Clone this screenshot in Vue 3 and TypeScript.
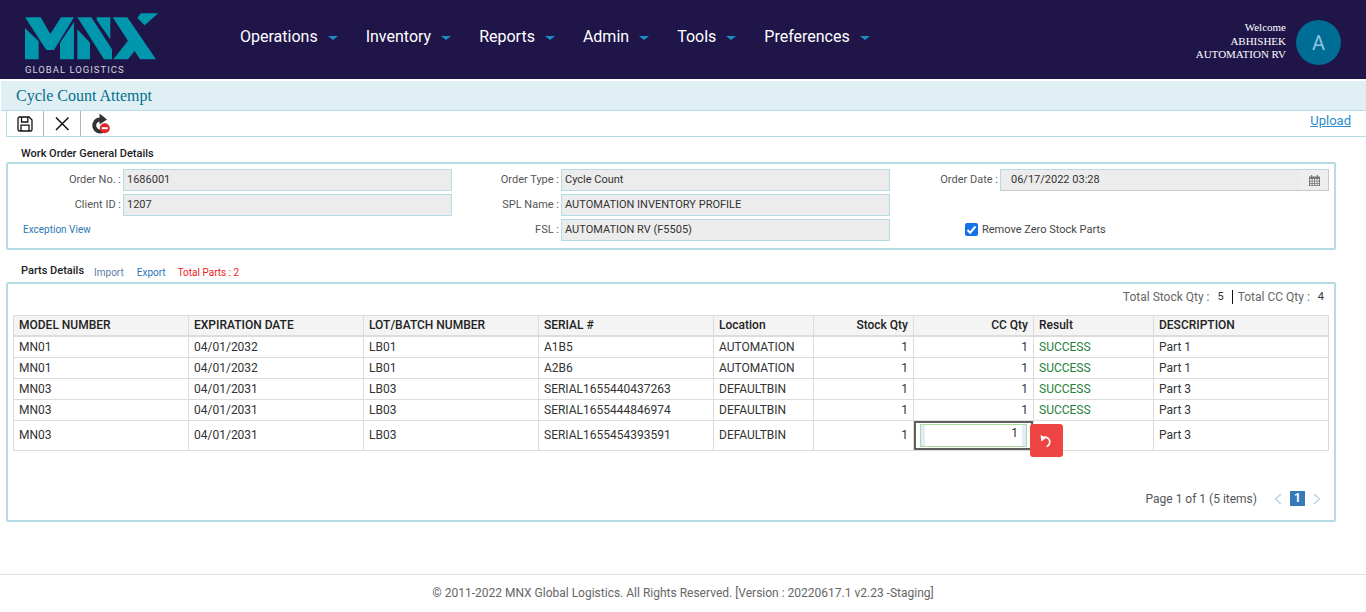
<script setup lang="ts">
type Part = {
  model: string;
  expiry: string;
  lot: string;
  serial: string;
  location: string;
  stock: number;
  cc: number;
  result: string;
  description: string;
};

const menu = ['Operations', 'Inventory', 'Reports', 'Admin', 'Tools', 'Preferences'];

const columns = [
  { label: 'MODEL NUMBER' },
  { label: 'EXPIRATION DATE' },
  { label: 'LOT/BATCH NUMBER' },
  { label: 'SERIAL #' },
  { label: 'Location' },
  { label: 'Stock Qty', right: true },
  { label: 'CC Qty', right: true },
  { label: 'Result' },
  { label: 'DESCRIPTION' },
];

const parts: Part[] = [
  { model: 'MN01', expiry: '04/01/2032', lot: 'LB01', serial: 'A1B5', location: 'AUTOMATION', stock: 1, cc: 1, result: 'SUCCESS', description: 'Part 1' },
  { model: 'MN01', expiry: '04/01/2032', lot: 'LB01', serial: 'A2B6', location: 'AUTOMATION', stock: 1, cc: 1, result: 'SUCCESS', description: 'Part 1' },
  { model: 'MN03', expiry: '04/01/2031', lot: 'LB03', serial: 'SERIAL1655440437263', location: 'DEFAULTBIN', stock: 1, cc: 1, result: 'SUCCESS', description: 'Part 3' },
  { model: 'MN03', expiry: '04/01/2031', lot: 'LB03', serial: 'SERIAL1655444846974', location: 'DEFAULTBIN', stock: 1, cc: 1, result: 'SUCCESS', description: 'Part 3' },
];

const editing: Part = { model: 'MN03', expiry: '04/01/2031', lot: 'LB03', serial: 'SERIAL1655454393591', location: 'DEFAULTBIN', stock: 1, cc: 1, result: '', description: 'Part 3' };
</script>

<template>
  <div class="page">
    <header class="topbar">
      <div class="logo">
        <svg width="134" height="47" viewBox="75 39 402 141">
          <g fill="#0097ad">
            <path d="M75 84L116 124V178H75Z" />
            <path d="M75 52H122L151 102L183 52H222L162 150H139Z" />
            <path d="M222 66V178H180V128Z" />
            <path d="M232 88L270 128V178H232Z" />
            <path d="M232 52H274L336 148V178H312Z" />
            <path d="M290 52H331V118L290 60Z" />
            <path d="M338 52H382L468 178H420Z" />
            <path d="M340 178L384 122L406 150L384 178Z" />
            <path d="M422 40H475L434 76L412 54Z" />
          </g>
        </svg>
        <span class="logo-text">GLOBAL LOGISTICS</span>
      </div>
      <nav class="menu">
        <a v-for="item in menu" :key="item" class="menu-item">
          {{ item }}<i class="caret"></i>
        </a>
      </nav>
      <div class="user">
        <div class="welcome">
          <div>Welcome</div>
          <div>ABHISHEK</div>
          <div>AUTOMATION RV</div>
        </div>
        <div class="avatar">A</div>
      </div>
    </header>

    <div class="title-bar">Cycle Count Attempt</div>

    <div class="toolbar">
      <button class="tool">
        <svg width="16" height="16" viewBox="0 0 16 16" fill="none" stroke="#111" stroke-width="1.3">
          <path d="M2.6 1H12L15 4V13.4A1.6 1.6 0 0 1 13.4 15H2.6A1.6 1.6 0 0 1 1 13.4V2.6A1.6 1.6 0 0 1 2.6 1Z" />
          <path d="M4.5 1V6H10.8V1M4 15V9.2H12V15" />
        </svg>
      </button>
      <button class="tool">
        <svg width="16" height="16" viewBox="0 0 16 16" fill="none" stroke="#111" stroke-width="1.5">
          <path d="M2 1.5L14.5 14M14.5 1.5L2 14" />
        </svg>
      </button>
      <button class="tool">
        <svg width="22" height="22" viewBox="0 0 22 22">
          <path fill="none" stroke="#333" stroke-width="4" d="M11 6.5A6 6 0 1 0 14 17.8" />
          <path fill="#333" d="M10.5 0.5L18 6.5L10.5 11.5Z" />
          <circle cx="15.8" cy="15.2" r="5" fill="#e0262b" />
          <rect x="12.8" y="14.2" width="6" height="2" fill="#fff" />
        </svg>
      </button>
      <a class="upload">Upload</a>
    </div>

    <section class="block">
      <h4 class="block-title">Work Order General Details</h4>
      <div class="box general">
        <div class="col">
          <div class="field"><label>Order No. :</label><span class="input">1686001</span></div>
          <div class="field"><label>Client ID :</label><span class="input">1207</span></div>
          <a class="exception">Exception View</a>
        </div>
        <div class="col">
          <div class="field"><label>Order Type :</label><span class="input">Cycle Count</span></div>
          <div class="field"><label>SPL Name :</label><span class="input">AUTOMATION INVENTORY PROFILE</span></div>
          <div class="field"><label>FSL :</label><span class="input">AUTOMATION RV (F5505)</span></div>
        </div>
        <div class="col">
          <div class="field">
            <label>Order Date :</label>
            <span class="input date">
              <span class="date-value">06/17/2022 03:28</span>
              <span class="date-btn">
                <svg width="11" height="11" viewBox="0 0 11 11">
                  <path fill="#777" d="M0 1.5H2V0H3.2V1.5H7.8V0H9V1.5H11V11H0ZM1 4V5.7H2.7V4ZM3.5 4V5.7H5.2V4ZM6 4V5.7H7.7V4ZM8.4 4V5.7H10V4ZM1 6.4V8H2.7V6.4ZM3.5 6.4V8H5.2V6.4ZM6 6.4V8H7.7V6.4ZM8.4 6.4V8H10V6.4ZM1 8.7V10.2H2.7V8.7ZM3.5 8.7V10.2H5.2V8.7ZM6 8.7V10.2H7.7V8.7ZM8.4 8.7V10.2H10V8.7Z" />
                </svg>
              </span>
            </span>
          </div>
          <div class="field empty"></div>
          <div class="check-row">
            <span class="checkbox">
              <svg width="13" height="13" viewBox="0 0 13 13" fill="none" stroke="#fff" stroke-width="2">
                <path d="M2.5 7L5.2 9.7L10.5 3.5" />
              </svg>
            </span>
            <span>Remove Zero Stock Parts</span>
          </div>
        </div>
      </div>
    </section>

    <section class="block parts">
      <div class="parts-head">
        <h4 class="block-title">Parts Details</h4>
        <a class="import">Import</a>
        <a class="export">Export</a>
        <span class="total-parts">Total Parts : 2</span>
      </div>
      <div class="box grid-box">
        <div class="totals">
          <span class="tot-label">Total Stock Qty :</span><span class="tot-val">5</span>
          <i class="tot-sep"></i>
          <span class="tot-label">Total CC Qty :</span><span class="tot-val last">4</span>
        </div>
        <table class="grid">
          <colgroup>
            <col style="width: 175px" />
            <col style="width: 175px" />
            <col style="width: 175px" />
            <col style="width: 175px" />
            <col style="width: 100px" />
            <col style="width: 100px" />
            <col style="width: 120px" />
            <col style="width: 120px" />
            <col style="width: 175px" />
          </colgroup>
          <thead>
            <tr>
              <th v-for="c in columns" :key="c.label" :class="{ num: c.right }">{{ c.label }}</th>
            </tr>
          </thead>
          <tbody>
            <tr v-for="p in parts" :key="p.serial">
              <td>{{ p.model }}</td>
              <td>{{ p.expiry }}</td>
              <td>{{ p.lot }}</td>
              <td>{{ p.serial }}</td>
              <td>{{ p.location }}</td>
              <td class="num">{{ p.stock }}</td>
              <td class="num">{{ p.cc }}</td>
              <td class="ok">{{ p.result }}</td>
              <td>{{ p.description }}</td>
            </tr>
            <tr class="edit-row">
              <td>{{ editing.model }}</td>
              <td>{{ editing.expiry }}</td>
              <td>{{ editing.lot }}</td>
              <td>{{ editing.serial }}</td>
              <td>{{ editing.location }}</td>
              <td class="num">{{ editing.stock }}</td>
              <td class="edit-cell">
                <div class="edit-frame">
                  <div class="edit-input">{{ editing.cc }}</div>
                </div>
                <button class="undo">
                  <svg width="16" height="16" viewBox="0 0 14 14" fill="none" stroke="#fff" stroke-width="1.5">
                    <path d="M4 3.9A4 4 0 1 1 6.6 11.8" />
                    <path fill="#fff" stroke="none" d="M1.4 1.8L6.4 4.2L2 7.4Z" />
                  </svg>
                </button>
              </td>
              <td></td>
              <td>{{ editing.description }}</td>
            </tr>
          </tbody>
        </table>
        <div class="pager">
          <span class="pager-info">Page 1 of 1 (5 items)</span>
          <svg class="chev" width="10" height="12" viewBox="0 0 10 12" fill="none" stroke="#bcd3ea" stroke-width="1.5">
            <path d="M8 1L2.5 6L8 11" />
          </svg>
          <span class="page-no">1</span>
          <svg class="chev" width="10" height="12" viewBox="0 0 10 12" fill="none" stroke="#bcd3ea" stroke-width="1.5">
            <path d="M2 1L7.5 6L2 11" />
          </svg>
        </div>
      </div>
    </section>

    <footer class="footer">© 2011-2022 MNX Global Logistics. All Rights Reserved. [Version : 20220617.1 v2.23 -Staging]</footer>
  </div>
</template>

<style scoped>
.page {
  height: 612px;
  display: flex;
  flex-direction: column;
  font-family: Roboto, "Liberation Sans", sans-serif;
  color: #333;
  background: #fff;
  overflow: hidden;
}

.topbar {
  height: 79px;
  flex: none;
  display: flex;
  align-items: center;
  background: #1f1549;
  color: #fff;
}

.logo {
  width: 240px;
  padding-left: 25px;
  box-sizing: border-box;
  height: 79px;
  display: flex;
  flex-direction: column;
  align-items: flex-start;
  padding-top: 13px;
  flex: none;
}

.logo svg {
  display: block;
}

.logo-text {
  font-size: 9.5px;
  letter-spacing: 1px;
  color: #d5d5dd;
  line-height: 10px;
  margin-top: 5px;
}

.menu {
  display: flex;
  flex: 1;
  gap: 28px;
  margin-top: -6px;
}

.menu-item {
  font-size: 16px;
  color: #fff;
  display: flex;
  align-items: center;
  line-height: 24px;
}

.caret {
  width: 0;
  height: 0;
  margin: 2px 0 0 10px;
  border-left: 5px solid transparent;
  border-right: 5px solid transparent;
  border-top: 4px solid #1b8fc4;
}

.user {
  display: flex;
  align-items: center;
  padding-right: 25px;
  margin-top: 6px;
}

.welcome {
  font-family: "Liberation Serif", serif;
  font-size: 11px;
  line-height: 13.5px;
  text-align: right;
  margin-right: 10px;
  margin-top: -2px;
}

.avatar {
  width: 45px;
  height: 45px;
  border-radius: 50%;
  background: #006d94;
  color: #8ec3e4;
  font-size: 20px;
  display: flex;
  align-items: center;
  justify-content: center;
}

.title-bar {
  height: 29px;
  flex: none;
  margin: 2px 0 0 1px;
  padding-left: 15px;
  background: #e0eff3;
  border-bottom: 1px solid #b5dce2;
  font-family: "Liberation Serif", serif;
  font-size: 16px;
  line-height: 29px;
  color: #00708f;
}

.toolbar {
  height: 25px;
  flex: none;
  margin-left: 6px;
  display: flex;
  align-items: center;
  border-left: 1px solid #b5dce2;
  border-bottom: 1px solid #b5dce2;
}

.tool {
  width: 37px;
  height: 25px;
  padding: 0;
  border: 0;
  border-right: 1px solid #b5b5b5;
  background: #fff;
  display: flex;
  align-items: center;
  justify-content: center;
}

.tool:last-of-type {
  border-right: 0;
}

.upload {
  margin-left: auto;
  margin-right: 15px;
  margin-top: -6px;
  font-size: 13px;
  color: #2a8cc8;
  text-decoration: underline;
}

.block {
  margin: 0 30px 0 6px;
  flex: none;
}

.block-title {
  margin: 0;
  padding-left: 15px;
  font-size: 11px;
  font-weight: 500;
  color: #222;
  line-height: 14px;
}

.block > .block-title {
  padding-top: 10px;
  padding-bottom: 1px;
}

.box {
  border: 2px solid #b5dce2;
  border-radius: 2px;
  box-sizing: border-box;
}

.general {
  height: 88px;
  display: grid;
  grid-template-columns: 444px 438px 1fr;
  padding-top: 5px;
}

.col {
  display: flex;
  flex-direction: column;
  gap: 3px;
}

.field {
  display: flex;
  align-items: center;
  height: 22px;
  font-size: 11px;
  color: #555;
}

.field label {
  width: 113px;
  text-align: right;
  padding-right: 2px;
  flex: none;
  position: relative;
  top: -1px;
}

.col:nth-child(2) .field label {
  width: 107px;
}

.col:nth-child(3) .field label {
  width: 108px;
}

.input {
  width: 329px;
  height: 22px;
  box-sizing: border-box;
  border: 1px solid #b5dce2;
  background: #ececec;
  color: #333;
  font-size: 11px;
  line-height: 20px;
  padding-left: 3px;
  display: block;
}

.date {
  display: flex;
  padding: 0;
  border-color: #b5dce2 #c8c8c8 #c8c8c8 #b5dce2;
}

.date-value {
  flex: 1;
  padding-left: 10px;
}

.date-btn {
  width: 27px;
  display: flex;
  align-items: center;
  justify-content: center;
  background: #eee;
}

.exception {
  font-size: 10px;
  color: #2b77b5;
  padding-left: 15px;
  line-height: 21px;
}

.check-row {
  display: flex;
  align-items: center;
  height: 20px;
  padding-left: 75px;
  font-size: 11px;
  color: #444;
}

.checkbox {
  width: 13px;
  height: 13px;
  background: #1373e6;
  border-radius: 2px;
  margin-right: 4px;
  display: block;
}

.checkbox svg {
  display: block;
}

.parts-head {
  display: flex;
  align-items: baseline;
  padding-top: 14px;
  height: 18px;
}

.parts-head .block-title {
  padding-right: 10px;
}

.parts-head a,
.total-parts {
  font-size: 10px;
  position: relative;
  top: 2px;
}

.import {
  color: #5b7fa6;
  margin-right: 13px;
}

.export {
  color: #2b77b5;
  margin-right: 12px;
}

.total-parts {
  color: #f01c22;
}

.grid-box {
  height: 240px;
  padding: 0 5px;
  display: flex;
  flex-direction: column;
  position: relative;
}

.totals {
  height: 31px;
  box-sizing: border-box;
  padding-bottom: 6px;
  flex: none;
  display: flex;
  align-items: center;
  justify-content: flex-end;
  font-size: 12px;
  color: #333;
}

.tot-label {
  color: #666;
}

.tot-val {
  margin-left: 8px;
  font-size: 11px;
}

.tot-val.last {
  margin-right: 5px;
  margin-left: 8px;
}

.tot-sep {
  width: 1px;
  height: 14px;
  background: #111;
  margin: 0 5px 0 8px;
}

.grid {
  width: 1315px;
  table-layout: fixed;
  border-collapse: collapse;
  font-size: 12px;
  color: #333;
}

.grid th,
.grid td {
  border: 1px solid #dcdcdc;
  padding: 0 5px;
  text-align: left;
  white-space: nowrap;
  overflow: hidden;
}

.grid th {
  height: 17px;
  padding-bottom: 2px;
  background: #f4f4f4;
  border-bottom: 2px solid #dcdcdc;
  font-weight: 500;
  color: #222;
}

.grid td {
  height: 20px;
}

.grid .num {
  text-align: right;
}

.grid td.ok {
  color: #27803a;
}

.edit-row td {
  height: 28px;
  padding-bottom: 1px;
}

.grid td.edit-cell {
  height: 29px;
  padding: 0;
  position: relative;
  overflow: visible;
}

.edit-frame {
  height: 29px;
  border: 2px solid #5f5f5f;
  box-sizing: border-box;
  padding: 1px 4px;
}

.edit-input {
  height: 23px;
  box-sizing: border-box;
  border: 1px solid #a8dd9b;
  box-shadow: inset 4px 0 #e3ecf8, inset -4px 0 #e3ecf8;
  color: #333;
  text-align: right;
  line-height: 17px;
  padding-right: 8px;
}

.undo {
  position: absolute;
  left: 116px;
  top: 3px;
  width: 33px;
  height: 33px;
  border: 0;
  padding: 0;
  border-radius: 3px;
  background: #ef4444;
  display: flex;
  align-items: center;
  justify-content: center;
  z-index: 2;
}

.pager {
  position: absolute;
  right: 12px;
  bottom: 14px;
  display: flex;
  align-items: center;
  font-size: 12px;
  color: #555;
}

.pager-info {
  margin-right: 16px;
}

.page-no {
  width: 15px;
  height: 15px;
  margin: 0 7px;
  background: #337ab7;
  color: #fff;
  font-size: 12px;
  font-weight: 700;
  line-height: 15px;
  text-align: center;
}

.footer {
  margin-top: auto;
  height: 37px;
  flex: none;
  border-top: 1px solid #e0e0e0;
  font-size: 12px;
  line-height: 37px;
  text-align: center;
  color: #666;
}
</style>
